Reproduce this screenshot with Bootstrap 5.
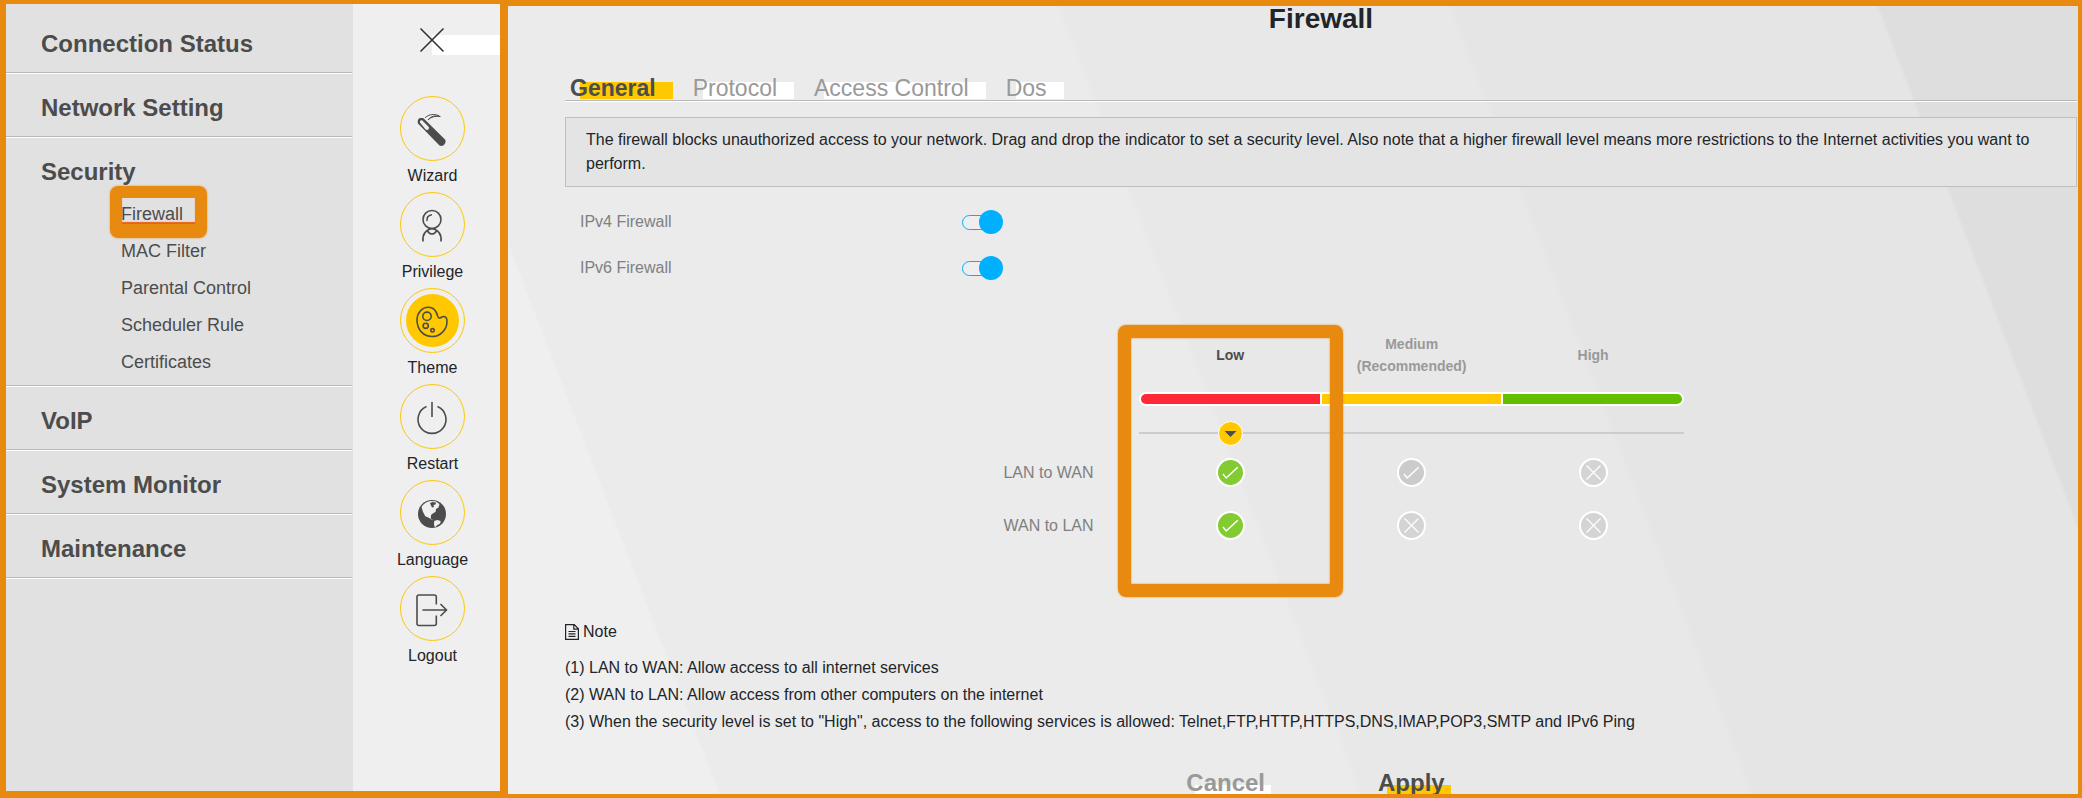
<!DOCTYPE html>
<html lang="en">
<head>
<meta charset="utf-8">
<meta name="viewport" content="width=device-width, initial-scale=1">
<title>Firewall</title>
<link href="https://cdn.jsdelivr.net/npm/bootstrap@5.3.0/dist/css/bootstrap.min.css" rel="stylesheet">
<style>
  :root { --frame: #e88a10; --sun: #ffc800; --ink: #4c4c4c; }
  body { font-family: "Liberation Sans", Arial, sans-serif; font-size: 16px; line-height: 24px; color: #212529; background: #ebebeb; }
  button { font-family: inherit; }

  /* Navigation drawer */
  .drawer { border: solid var(--frame); border-width: 4px 8px 7px 6px; background: #efefef; }
  .side-menu { width: 347px; padding: 6px 1px 0 0; background: #e1e1e1; }
  .side-item { padding: 16px 0 10px 35px; border-bottom: 1px solid #b8b8b8; box-shadow: 0 1px 0 #fff; margin-bottom: 1px; }
  .side-item.open { padding-bottom: 4px; }
  .side-item > a { display: block; font-size: 24px; line-height: 36px; font-weight: 700; color: var(--ink); text-decoration: none; }
  .side-sub { padding: 6px 0 0 80px; }
  .side-sub a { display: inline-block; font-size: 18px; line-height: 37px; color: var(--ink); text-decoration: none; }
  .marker { position: absolute; pointer-events: none; border: 12px solid var(--frame); border-radius: 8px; box-shadow: 0 0 2px var(--frame), inset 0 0 2px var(--frame); }
  .marker-link { inset: -10px auto -5px -11px; width: 97px; border-bottom-width: 14px; box-shadow: 0 0 2px var(--frame), inset 0 -2px 1px #ee6010; }

  .tools { width: 147px; }
  .close-btn { height: 92px; padding: 23px 0 0 66px; background: linear-gradient(#fff, #fff) right 31px / 68px 20px no-repeat; }
  .tool-list { padding-left: 12px; }
  .tool { color: #212529; width: 100%; margin-bottom: 4px; }
  .tool:hover { color: #000; }
  .tool-ring { width: 65px; height: 65px; margin-bottom: 3px; border: 1px solid var(--sun); }
  .tool-ring svg { display: block; margin: -1px; }
  .stroke-ink { fill: none; stroke: var(--ink); stroke-width: 1.6; }

  /* Content panel */
  .panel { border: solid var(--frame); border-width: 6px 4px 4px 0; padding: 0 1px 0 57px;
    background: linear-gradient(69deg, #efefef 11.2%, #ebebeb 11.4%, #ebebeb 45.4%, #e8e8e8 45.7%, #e8e8e8 66.3%, #e5e5e5 66.6%, #e5e5e5 89.2%, #dedede 89.4%); }
  .panel h1 { font-size: 28px; line-height: 26px; font-weight: 700; margin-bottom: 44px; }
  .tab-strip { gap: 20px; padding-left: 5px; border-bottom: 1px solid #b8b8b8; box-shadow: 0 1px 0 #fff; margin-bottom: 16px; }
  .tab-strip a { font-size: 23px; line-height: 24px; padding-right: 17px; color: #999; text-decoration: none;
    background: linear-gradient(#fff, #fff) 10px 6px / 100% 17px no-repeat; }
  .tab-strip a.active { font-weight: 700; color: var(--ink); background-image: linear-gradient(var(--sun), var(--sun)); }
  .info { background: #e4e4e4; border: 1px solid #bfbfbf; padding: 10px 20px; margin-bottom: 12px; }
  .setting { height: 46px; padding-left: 15px; color: #808080; }
  .setting label { flex: 0 0 25.5%; }
  .toggle { appearance: none; display: grid; align-items: center; width: 41px; height: 24px; margin: 0; cursor: pointer; }
  .toggle::before { content: ""; grid-area: 1 / 1; width: 32px; height: 15px; border: 1px solid #00b0ff; border-radius: 8px; background: #eee; }
  .toggle::after { content: ""; grid-area: 1 / 1; width: 24px; height: 24px; border-radius: 50%; background: #999; }
  .toggle:checked::after { justify-self: end; background: #00b0ff; }

  .levels { width: 45%; margin: 42px 0 68px 29%; }
  .levels table { table-layout: fixed; width: 100%; border-collapse: collapse; }
  .levels th, .levels td { padding: 0; text-align: center; vertical-align: middle; }
  .levels .col-name { width: 136px; }
  .levels thead th { font-size: 14px; line-height: 22px; padding-bottom: 15px; color: #999; }
  .levels thead th.on { color: var(--ink); }
  .levels tbody th { font-weight: 400; color: #808080; text-align: left; }
  .levels tr.rule { height: 53px; }
  .levels svg { display: block; margin: auto; }
  .scale-bar { height: 14px; gap: 2px; border: 2px solid #fff; border-radius: 7px; background: #fff; overflow: hidden; }
  .slide { margin-top: 15px; height: 25px; background: linear-gradient(#ccc, #ccc) 0 11px / 100% 2px no-repeat; }
  .slide input { appearance: none; display: block; width: calc(66.667% + 25px); height: 25px; margin: 0 auto; background: none; }
  .slide input::-webkit-slider-thumb { appearance: none; width: 25px; height: 25px; border: 1px solid #fff; border-radius: 50%;
    background: var(--sun) url("data:image/svg+xml,%3Csvg xmlns='http://www.w3.org/2000/svg' viewBox='0 0 23 23'%3E%3Cpath d='M5.500 9h12l-6 6z' fill='%234c4c4c'/%3E%3C/svg%3E") center / 23px; }
  .marker-level { inset: -8px auto -45px 115px; width: calc((100% - 136px) / 3 + 43px); border-width: 13px; }

  .notes { line-height: 27px; margin: 10px 0 30px; }
  .actions { gap: 107px; padding-right: 5px; }
  .actions button { border: 0; padding: 0 6px 0 0; font-size: 24px; line-height: 36px; font-weight: 700; color: #999;
    background: linear-gradient(#fff, #fff) 9px 20px / 100% 17px no-repeat; }
  .actions button.go { color: var(--ink); background-image: linear-gradient(var(--sun), var(--sun)); }
</style>
</head>
<body class="d-flex vh-100 overflow-hidden">

<svg width="0" height="0" class="position-absolute" aria-hidden="true">
  <symbol id="allow" viewBox="0 0 29 29"><circle cx="14.500" cy="14.500" r="13.500" fill="currentColor" stroke="#fff" stroke-width="2"/><path d="M7 16l3.200 4L21.800 9.200" fill="none" stroke="#fff" stroke-width="1.500"/></symbol>
  <symbol id="deny" viewBox="0 0 29 29"><circle cx="14.500" cy="14.500" r="13.500" fill="currentColor" stroke="#fff" stroke-width="2"/><path d="M7.500 7.500l14 14M21.500 7.500l-14 14" fill="none" stroke="#fff" stroke-width="1.200"/></symbol>
</svg>

<aside class="drawer d-flex flex-shrink-0 overflow-hidden">
  <nav class="side-menu" aria-label="Main menu">
    <div class="side-item"><a href="#">Connection Status</a></div>
    <div class="side-item"><a href="#">Network Setting</a></div>
    <div class="side-item open">
      <a href="#">Security</a>
      <ul class="side-sub list-unstyled mb-0">
        <li class="position-relative d-flex"><a href="#" aria-current="page">Firewall</a><span class="marker marker-link"></span></li>
        <li class="d-flex"><a href="#">MAC Filter</a></li>
        <li class="d-flex"><a href="#">Parental Control</a></li>
        <li class="d-flex"><a href="#">Scheduler Rule</a></li>
        <li class="d-flex"><a href="#">Certificates</a></li>
      </ul>
    </div>
    <div class="side-item"><a href="#">VoIP</a></div>
    <div class="side-item"><a href="#">System Monitor</a></div>
    <div class="side-item"><a href="#">Maintenance</a></div>
  </nav>

  <div class="tools">
    <button type="button" class="close-btn d-flex align-items-start w-100 border-0" aria-label="Close menu">
      <svg width="26" height="26" viewBox="0 0 26 26"><path d="M1.500 1.500l23 23M24.500 1.500l-23 23" fill="none" stroke="#333" stroke-width="1.600"/></svg>
    </button>
    <div class="tool-list d-flex flex-column">
      <button type="button" class="tool border-0 bg-transparent p-0 d-flex flex-column align-items-center">
        <span class="tool-ring rounded-circle"><svg width="65" height="65" viewBox="0 0 65 65"><path d="M18 27.500c-1.200-4.500 1.500-6.200 5.500-5.200L45 43.500c2.300 3.500-2.500 8-5.500 6z" fill="#4c4c4c"/><path d="M20 26.500c-.4-2 1.200-2.800 2.600-1.800l6.200 6.200c.8 2.200-1.300 4-3.200 2.600z" fill="#efefef"/><path d="M25 21.700c4-3.400 9-4.200 14-1.900M28 24c3.500-3.300 7-4 12.300-3.500-5.300-1.200-9.200-.6-12.300 3.500z" fill="none" stroke="#4c4c4c" stroke-width="1"/></svg></span>
        <span>Wizard</span>
      </button>
      <button type="button" class="tool border-0 bg-transparent p-0 d-flex flex-column align-items-center">
        <span class="tool-ring rounded-circle"><svg width="65" height="65" viewBox="0 0 65 65" class="stroke-ink"><circle cx="32" cy="27.500" r="9"/><path d="M27 29c-.6-3 1.300-6 5-6.200M23 49.500c-.8-7 2.500-11.500 9-13 6.500 1.500 9.800 6 9 13M27.500 39c2.500 4 6.500 4 9 0"/></svg></span>
        <span>Privilege</span>
      </button>
      <button type="button" class="tool border-0 bg-transparent p-0 d-flex flex-column align-items-center">
        <span class="tool-ring rounded-circle"><svg width="65" height="65" viewBox="0 0 65 65" class="stroke-ink"><circle cx="32.500" cy="32.500" r="26.500" fill="#ffc800" stroke="none"/><path d="M37.500 27.500C36 22 32.500 19 28 19.200 21.500 19.500 17 25.500 17 32c0 9 6 16.500 15 16.500 8.500 0 14.800-7 15-14.500.1-3-.8-5.300-3-5.500-1.800-.2-3 1.600-4.700 1.500-1.200-.1-1.600-1.200-1.800-2.500z"/><circle cx="27" cy="28.300" r="4.200"/><circle cx="25.700" cy="37.800" r="2.600"/><circle cx="32.500" cy="42.300" r="1.700"/></svg></span>
        <span>Theme</span>
      </button>
      <button type="button" class="tool border-0 bg-transparent p-0 d-flex flex-column align-items-center">
        <span class="tool-ring rounded-circle"><svg width="65" height="65" viewBox="0 0 65 65" class="stroke-ink"><path d="M32 18v15M26.500 22.500a14 14 0 1 0 11 0"/></svg></span>
        <span>Restart</span>
      </button>
      <button type="button" class="tool border-0 bg-transparent p-0 d-flex flex-column align-items-center">
        <span class="tool-ring rounded-circle"><svg width="65" height="65" viewBox="0 0 65 65"><circle cx="32" cy="34" r="14" fill="#4c4c4c"/><path d="M21.500 27c2-3.500 5-5.500 9-6l5 .3 4 2.700-1 3.500-2.500 1.500-.5 3-2 1-2.500 2-.2 3.500 2.200 1.500-1-.2-3.200-2-3.500-1.600-2.300-4.200zM34.200 41l3-1 3.500 1-.5 2.500-3.500 2-1.700 2.300-1-3.300z" fill="#efefef"/><path d="M30 23l2.500-1 3.500.5-.5 2-2 .5.500 2-2 .5-1-2z" fill="#4c4c4c"/></svg></span>
        <span>Language</span>
      </button>
      <button type="button" class="tool border-0 bg-transparent p-0 d-flex flex-column align-items-center">
        <span class="tool-ring rounded-circle"><svg width="65" height="65" viewBox="0 0 65 65" class="stroke-ink"><path d="M36.300 28.500v-7.500q0-2-2-2H19q-2 0-2 2v26.500q0 2 2 2h15.300q2 0 2-2V39.500M22.500 34H46.500M40.500 28l6 6-6 6"/></svg></span>
        <span>Logout</span>
      </button>
    </div>
  </div>
</aside>

<main class="panel flex-grow-1 overflow-hidden">
  <h1 class="text-center">Firewall</h1>

  <nav class="tab-strip d-flex" aria-label="Firewall sections">
    <a href="#" class="active" aria-current="page">General</a>
    <a href="#">Protocol</a>
    <a href="#">Access Control</a>
    <a href="#">Dos</a>
  </nav>

  <div class="info">The firewall blocks unauthorized access to your network. Drag and drop the indicator to set a security level. Also note that a higher firewall level means more restrictions to the Internet activities you want to perform.</div>

  <div class="setting d-flex align-items-center">
    <label for="ipv4">IPv4 Firewall</label>
    <input class="toggle" type="checkbox" role="switch" id="ipv4" checked>
  </div>
  <div class="setting d-flex align-items-center">
    <label for="ipv6">IPv6 Firewall</label>
    <input class="toggle" type="checkbox" role="switch" id="ipv6" checked>
  </div>

  <div class="levels position-relative">
    <table>
      <thead>
        <tr><td class="col-name"></td><th scope="col" class="on">Low</th><th scope="col">Medium<br>(Recommended)</th><th scope="col">High</th></tr>
      </thead>
      <tbody>
        <tr>
          <td></td>
          <td colspan="3">
            <div class="scale-bar d-flex">
              <span class="flex-fill" style="background:#ff2837"></span>
              <span class="flex-fill" style="background:#ffc800"></span>
              <span class="flex-fill" style="background:#64be00"></span>
            </div>
            <div class="slide"><input type="range" min="0" max="2" value="0" aria-label="Security level"></div>
          </td>
        </tr>
        <tr class="rule">
          <th scope="row">LAN to WAN</th>
          <td><svg width="29" height="29" color="#82cb31" role="img" aria-label="Allowed"><use href="#allow"/></svg></td>
          <td><svg width="29" height="29" color="#cbcbcb" role="img" aria-label="Allowed"><use href="#allow"/></svg></td>
          <td><svg width="29" height="29" color="#d4d4d4" role="img" aria-label="Blocked"><use href="#deny"/></svg></td>
        </tr>
        <tr class="rule">
          <th scope="row">WAN to LAN</th>
          <td><svg width="29" height="29" color="#82cb31" role="img" aria-label="Allowed"><use href="#allow"/></svg></td>
          <td><svg width="29" height="29" color="#d4d4d4" role="img" aria-label="Blocked"><use href="#deny"/></svg></td>
          <td><svg width="29" height="29" color="#d4d4d4" role="img" aria-label="Blocked"><use href="#deny"/></svg></td>
        </tr>
      </tbody>
    </table>
    <span class="marker marker-level"></span>
  </div>

  <div class="d-flex align-items-center gap-1">
    <svg width="14" height="16" viewBox="0 0 14 16" fill="none" stroke="#212529" stroke-width="1.200" aria-hidden="true"><path d="M.6.600h8.600l4.200 4.200v10.600H.6zM8.800.800v4.400h4.400M3.500 7.500h7M3.500 9.900h7M3.500 12.300h7"/></svg>
    <span>Note</span>
  </div>
  <div class="notes">
    <div>(1) LAN to WAN: Allow access to all internet services</div>
    <div>(2) WAN to LAN: Allow access from other computers on the internet</div>
    <div>(3) When the security level is set to "High", access to the following services is allowed: Telnet,FTP,HTTP,HTTPS,DNS,IMAP,POP3,SMTP and IPv6 Ping</div>
  </div>

  <div class="actions d-flex justify-content-center">
    <button type="button">Cancel</button>
    <button type="button" class="go">Apply</button>
  </div>
</main>

<script src="https://cdn.jsdelivr.net/npm/bootstrap@5.3.0/dist/js/bootstrap.bundle.min.js"></script>
</body>
</html>
